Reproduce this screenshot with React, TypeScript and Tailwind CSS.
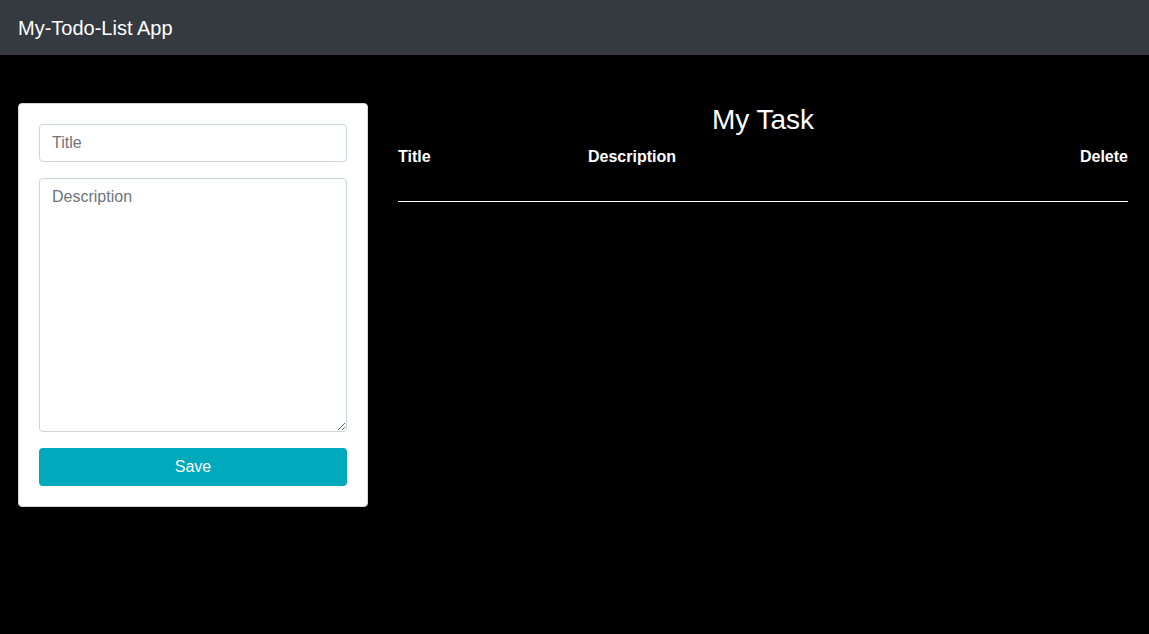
import { useState } from "react";

interface Task {
  id: number;
  title: string;
  description: string;
}

export default function App() {
  const [tasks, setTasks] = useState<Task[]>([]);
  const [title, setTitle] = useState("");
  const [description, setDescription] = useState("");

  const handleSave = (e: React.FormEvent) => {
    e.preventDefault();
    if (!title.trim()) return;
    setTasks([...tasks, { id: Date.now(), title, description }]);
    setTitle("");
    setDescription("");
  };

  const handleDelete = (id: number) => {
    setTasks(tasks.filter((t) => t.id !== id));
  };

  return (
    <div className="min-h-screen bg-black font-['Liberation_Sans',Arial,sans-serif]">
      <nav className="h-[55px] bg-[#343a40] flex items-center pl-[18px]">
        <span className="text-[20px] leading-[30px] text-white">My-Todo-List App</span>
      </nav>

      <div className="flex gap-[30px] pl-[18px] pr-[21px] pt-[48px]">
        <form
          onSubmit={handleSave}
          className="w-[350px] shrink-0 bg-white border border-[#d6d6d6] rounded p-5 flex flex-col"
        >
          <input
            type="text"
            placeholder="Title"
            value={title}
            onChange={(e) => setTitle(e.target.value)}
            className="h-[38px] px-3 text-base text-[#495057] border border-[#ced4da] rounded placeholder:text-[#6c757d] outline-none"
          />
          <textarea
            placeholder="Description"
            value={description}
            onChange={(e) => setDescription(e.target.value)}
            className="mt-4 h-[254px] px-3 py-1.5 text-base leading-6 text-[#495057] border border-[#ced4da] rounded placeholder:text-[#6c757d] outline-none"
          />
          <button
            type="submit"
            className="mt-4 h-[38px] bg-[#00a9bc] text-white text-base rounded"
          >
            Save
          </button>
        </form>

        <div className="flex-1">
          <h2 className="text-center text-[28px] leading-[34px] text-white">My Task</h2>
          <div className="mt-[8px] grid grid-cols-[190px_1fr_auto] text-white font-bold text-base leading-6">
            <span>Title</span>
            <span>Description</span>
            <span className="text-right">Delete</span>
          </div>
          {tasks.map((task) => (
            <div
              key={task.id}
              className="grid grid-cols-[190px_1fr_auto] text-white text-base leading-6 py-2"
            >
              <span>{task.title}</span>
              <span>{task.description}</span>
              <button onClick={() => handleDelete(task.id)} className="text-right">
                Delete
              </button>
            </div>
          ))}
          <div className="mt-[32px] border-t border-white" />
        </div>
      </div>
    </div>
  );
}
